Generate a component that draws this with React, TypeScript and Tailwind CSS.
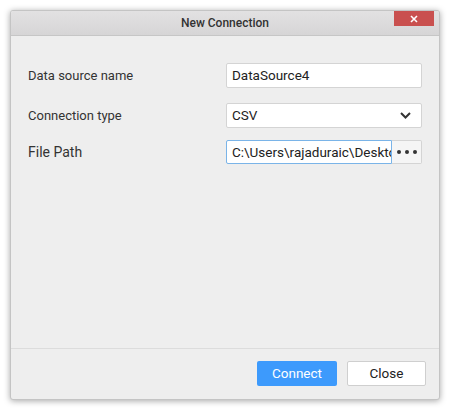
import React from "react";

export default function App() {
  const font = { fontFamily: "Roboto, 'Liberation Sans', sans-serif" };
  return (
    <div className="w-[450px] h-[410px] bg-white pt-[10px] pl-[10px]" style={font}>
      <div className="w-[430px] h-[390px] flex flex-col border border-[#c4c4c4] rounded-[3px] bg-[#eeeeee] shadow-[0_1px_6px_rgba(0,0,0,0.35)] overflow-hidden">
        <div className="relative h-[25px] shrink-0 flex items-center justify-center bg-gradient-to-b from-[#e2e1e2] to-[#d6d5d6] border-b border-[#c6c6c6]">
          <span className="text-[12px] font-medium text-[#333]">New Connection</span>
          <div className="absolute right-[5px] top-0 w-[40px] h-[15px] bg-[#c9504f] flex items-center justify-center">
            <svg width="8" height="8" viewBox="0 0 8 8">
              <path d="M1 1L7 7M7 1L1 7" stroke="white" strokeWidth="1.6" />
            </svg>
          </div>
        </div>
        <div className="flex-1 flex flex-col pl-[17px] pr-[17px] pt-[27px] border-b border-[#dcdcdc]">
          <div className="flex items-center justify-between h-[25px]">
            <span className="text-[13px] text-[#333]">Data source name</span>
            <div className="w-[196px] h-[25px] bg-white border border-[#d4d4d4] rounded-[2px] flex items-center pl-[5px] text-[13.5px] text-[#222]">
              DataSource4
            </div>
          </div>
          <div className="flex items-center justify-between h-[25px] mt-[15px]">
            <span className="text-[13px] text-[#333]">Connection type</span>
            <div className="w-[196px] h-[25px] bg-white border border-[#d4d4d4] rounded-[2px] flex items-center justify-between pl-[5px] pr-[10px] text-[13.5px] text-[#222]">
              <span>CSV</span>
              <svg width="11" height="7" viewBox="0 0 11 7">
                <path d="M1 1L5.5 5.5L10 1" stroke="#333" strokeWidth="2" fill="none" />
              </svg>
            </div>
          </div>
          <div className="flex items-center justify-between h-[24px] mt-[12px]">
            <span className="text-[14px] text-[#333]">File Path</span>
            <div className="w-[196px] h-[24px] flex">
              <div className="w-[166px] h-full bg-white border border-[#7ab4e8] rounded-l-[2px] flex items-center pl-[5px] text-[13.5px] text-[#222] overflow-hidden whitespace-nowrap">
                C:\Users\rajaduraic\Desktop\Files\Data.csv
              </div>
              <div className="flex-1 h-full bg-[#f5f5f5] border border-l-0 border-[#d4d4d4] rounded-r-[2px] flex items-center justify-center gap-[4px]">
                <span className="w-[4px] h-[4px] rounded-full bg-[#333]" />
                <span className="w-[4px] h-[4px] rounded-full bg-[#333]" />
                <span className="w-[4px] h-[4px] rounded-full bg-[#333]" />
              </div>
            </div>
          </div>
        </div>
        <div className="h-[50px] shrink-0 flex items-start justify-end gap-[10px] pt-[12px] pr-[13px]">
          <div className="w-[80px] h-[25px] bg-[#3d9afc] rounded-[2px] flex items-center justify-center text-[13.5px] text-white">
            Connect
          </div>
          <div className="w-[79px] h-[25px] bg-white border border-[#cfcfcf] rounded-[2px] flex items-center justify-center text-[13.5px] text-[#222]">
            Close
          </div>
        </div>
      </div>
    </div>
  );
}
